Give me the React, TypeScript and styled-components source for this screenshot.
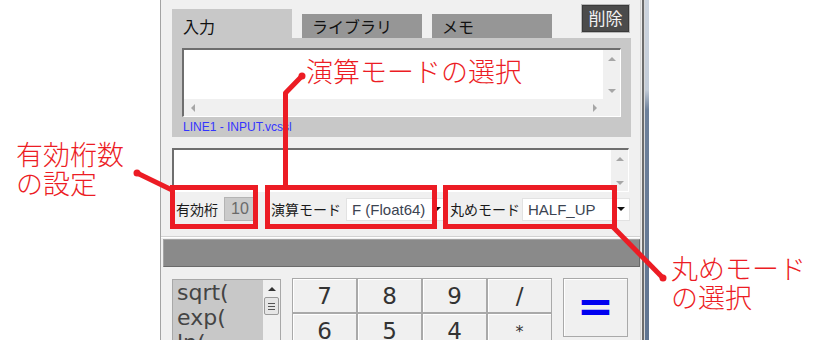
import React from "react"
import styled, { createGlobalStyle } from "styled-components"

const RED = "#ec1c24"

const GlobalStyle = createGlobalStyle`
	*, *::before, *::after { box-sizing: border-box; }
	html, body { margin: 0; padding: 0; background: #fff; }
	body { font-family: "Noto Sans CJK JP", "Noto Sans", sans-serif; }
`

type Dir = "up" | "down" | "left" | "right"

const Page = styled.div`
	position: relative;
	width: 822px;
	height: 340px;
	overflow: hidden;
	display: flex;
	background: #fff;
`

const Window = styled.div`
	flex-shrink: 0;
	width: 481px;
	height: 340px;
	margin-left: 160px;
	border-left: 1px solid #a3a3a3;
	border-right: 1px solid #d4d4d4;
	background: #f0f0f0;
`

const FrameEdge = styled.div`
	flex-shrink: 0;
	width: 8px;
	height: 340px;
	background: linear-gradient(to right, #ececec 0 1px, #6c6c6c 1px 3px, #d8d8d8 3px 4px, transparent 4px),
		linear-gradient(to bottom, #cdd5df 0, #c3ccd8 90px, #6e819b 110px, #5f7491 100%);
`

const TabBar = styled.div`
	display: flex;
	align-items: flex-end;
	height: 38px;
	padding: 4px 10px 0 11px;
`

const Tab = styled.div<{ $active?: boolean }>`
	width: 120px;
	height: ${({ $active }) => ($active ? "29px" : "24px")};
	padding: ${({ $active }) => ($active ? "5px 11px 0" : "0 10px")};
	background: ${({ $active }) => ($active ? "#c8c8c8" : "#969696")};
	font-size: 16px;
	line-height: 24px;
	color: #111;
	& + & {
		margin-left: 10px;
	}
`

const DeleteButton = styled.div`
	align-self: flex-start;
	margin-left: auto;
	width: 49px;
	height: 29px;
	border: 1px solid #b8b8b8;
	box-shadow: inset 0 0 0 1px #3a3a3a;
	background: #4b4b4b;
	color: #f2f2f2;
	font-size: 17px;
	line-height: 26px;
	text-align: center;
`

const Panel = styled.div`
	margin: 0 9px 0 11px;
	height: 99px;
	padding: 10px 10px 0;
	background: #c8c8c8;
`

const Editor = styled.div<{ $h: number; $hscroll?: boolean }>`
	height: ${({ $h }) => $h}px;
	border-top: 2px solid #6e6e6e;
	border-left: 2px solid #6e6e6e;
	border-right: 1px solid #fff;
	border-bottom: 1px solid #fff;
	display: grid;
	grid-template-columns: 1fr 17px;
	grid-template-rows: ${({ $hscroll }) => ($hscroll ? "1fr 17px" : "1fr")};
	background: #fff;
`

const EditArea = styled.div`
	background: #fff;
`

const VScroll = styled.div`
	display: flex;
	flex-direction: column;
	justify-content: space-between;
	background: #f0f0f0;
`

const HScroll = styled.div`
	display: flex;
	justify-content: space-between;
	background: #f0f0f0;
`

const ScrollCorner = styled.div`
	background: #f0f0f0;
`

const ScrollBtn = styled.div`
	width: 17px;
	height: 17px;
	display: flex;
	align-items: center;
	justify-content: center;
`

const Arrow = styled.span<{ $dir: Dir; $color?: string }>`
	width: 0;
	height: 0;
	border-style: solid;
	border-color: transparent;
	${({ $dir, $color = "#a6a6a6" }) => {
		if ($dir === "up") return `border-width: 0 4px 4px; border-bottom-color: ${$color};`
		if ($dir === "down") return `border-width: 4px 4px 0; border-top-color: ${$color};`
		if ($dir === "left") return `border-width: 4px 4px 4px 0; border-right-color: ${$color};`
		return `border-width: 4px 0 4px 4px; border-left-color: ${$color};`
	}}
`

const FileLabel = styled.div`
	height: 20px;
	padding-left: 1px;
	font-family: "Liberation Sans", Arial, sans-serif;
	font-size: 12px;
	line-height: 21px;
	color: #3434ff;
`

const LowerEditor = styled.div`
	margin: 11px 11px 0;
`

const OptionsRow = styled.div`
	display: flex;
	align-items: center;
	height: 34px;
	padding: 0 9px 0 15px;
`

const OptLabel = styled.span<{ $gapLeft?: number; $gapRight?: number }>`
	margin-left: ${({ $gapLeft = 0 }) => $gapLeft}px;
	margin-right: ${({ $gapRight = 0 }) => $gapRight}px;
	font-size: 14px;
	color: #1a1a1a;
	white-space: nowrap;
`

const DigitsInput = styled.div`
	width: 34px;
	height: 24px;
	padding-left: 6px;
	border: 1px solid #b4b4b4;
	background: #cbcbcb;
	font-family: "Liberation Sans", Arial, sans-serif;
	font-size: 16px;
	line-height: 22px;
	color: #6a6a6a;
`

const Select = styled.div<{ $w: number }>`
	width: ${({ $w }) => $w}px;
	height: 23px;
	display: flex;
	align-items: center;
	justify-content: space-between;
	padding: 0 4px 0 5px;
	border: 1px solid #e2e2e2;
	background: #fff;
	font-family: "Liberation Sans", Arial, sans-serif;
	font-size: 15px;
	color: #3c4452;
`

const Separator = styled.div`
	margin-top: 10px;
	height: 2px;
	border-top: 1px solid #d2d2d2;
	border-bottom: 1px solid #fff;
`

const StatusBar = styled.div`
	margin: 1px 0 0 2px;
	height: 28px;
	background: #8a8a8a;
	border-top: 1px solid #a4a4a4;
	border-left: 1px solid #a4a4a4;
	border-right: 1px solid #6a6a6a;
	border-bottom: 1px solid #6a6a6a;
`

const Keypad = styled.div`
	display: flex;
	align-items: flex-start;
	margin-top: 11px;
	padding-left: 11px;
`

const FuncList = styled.div`
	width: 109px;
	height: 80px;
	margin-top: 1px;
	border: 1px solid #a8a8a8;
	display: flex;
	background: #c8c8c8;
`

const FuncItems = styled.div`
	flex: 1;
	padding: 0 0 0 4px;
	font-family: "DejaVu Sans", Verdana, sans-serif;
	font-size: 22px;
	line-height: 25px;
	color: #444;
`

const ListScroll = styled.div`
	width: 17px;
	display: flex;
	flex-direction: column;
	align-items: center;
	background: #f0f0f0;
`

const Thumb = styled.div`
	width: 15px;
	height: 18px;
	border: 1px solid #9a9a9a;
	border-radius: 2px;
	background: #e6e6e6;
	display: flex;
	flex-direction: column;
	align-items: center;
	justify-content: center;
	gap: 2px;
`

const Grip = styled.span`
	width: 7px;
	height: 1px;
	background: #555;
`

const Keys = styled.div`
	display: grid;
	grid-template-columns: repeat(4, 65px);
	grid-auto-rows: 35px;
	margin-left: 11px;
`

const Key = styled.div<{ $small?: boolean }>`
	display: flex;
	align-items: ${({ $small }) => ($small ? "flex-start" : "center")};
	justify-content: center;
	padding-top: ${({ $small }) => ($small ? "8px" : "0")};
	border: 1px solid #a9a9a9;
	box-shadow: inset 1px 1px #fff;
	background: #f0f0f0;
	font-family: "DejaVu Sans", Verdana, sans-serif;
	font-size: ${({ $small }) => ($small ? "16px" : "23px")};
	color: #333;
`

const EqualsKey = styled(Key)`
	width: 65px;
	height: 59px;
	margin-left: 11px;
	padding-bottom: 4px;
	font-size: 44px;
	font-weight: bold;
	color: #0000f0;
`

const Overlay = styled.svg`
	position: absolute;
	left: 0;
	top: 0;
	pointer-events: none;
`

const Callout = styled.div<{ $left: number; $top: number }>`
	position: absolute;
	left: ${({ $left }) => $left}px;
	top: ${({ $top }) => $top}px;
	font-family: "Noto Sans CJK JP", "Noto Sans", sans-serif;
	font-size: 27px;
	font-weight: 300;
	line-height: 29px;
	color: ${RED};
	white-space: pre;
`

const Scrollbar = ({ h }: { h?: boolean }) =>
	h ? (
		<HScroll>
			<ScrollBtn>
				<Arrow $dir="left" />
			</ScrollBtn>
			<ScrollBtn>
				<Arrow $dir="right" />
			</ScrollBtn>
		</HScroll>
	) : (
		<VScroll>
			<ScrollBtn>
				<Arrow $dir="up" />
			</ScrollBtn>
			<ScrollBtn>
				<Arrow $dir="down" />
			</ScrollBtn>
		</VScroll>
	)

const keys = ["7", "8", "9", "/", "6", "5", "4", "*"]

const App = () => {
	return (
		<Page>
			<GlobalStyle />
			<Window>
				<TabBar>
					<Tab $active>入力</Tab>
					<Tab>ライブラリ</Tab>
					<Tab>メモ</Tab>
					<DeleteButton>削除</DeleteButton>
				</TabBar>
				<Panel>
					<Editor $h={69} $hscroll>
						<EditArea />
						<Scrollbar />
						<Scrollbar h />
						<ScrollCorner />
					</Editor>
					<FileLabel>LINE1 - INPUT.vcssl</FileLabel>
				</Panel>
				<LowerEditor>
					<Editor $h={44}>
						<EditArea />
						<Scrollbar />
					</Editor>
				</LowerEditor>
				<OptionsRow>
					<OptLabel $gapRight={6}>有効桁</OptLabel>
					<DigitsInput>10</DigitsInput>
					<OptLabel $gapLeft={13} $gapRight={5}>
						演算モード
					</OptLabel>
					<Select $w={100}>
						<span>F (Float64)</span>
						<Arrow $dir="down" $color="#111" />
					</Select>
					<OptLabel $gapLeft={4} $gapRight={2}>
						丸めモード
					</OptLabel>
					<Select $w={108}>
						<span>HALF_UP</span>
						<Arrow $dir="down" $color="#111" />
					</Select>
				</OptionsRow>
				<Separator />
				<StatusBar />
				<Keypad>
					<FuncList>
						<FuncItems>
							<div>sqrt(</div>
							<div>exp(</div>
							<div>ln(</div>
						</FuncItems>
						<ListScroll>
							<ScrollBtn>
								<Arrow $dir="up" $color="#333" />
							</ScrollBtn>
							<Thumb>
								<Grip />
								<Grip />
								<Grip />
							</Thumb>
						</ListScroll>
					</FuncList>
					<Keys>
						{keys.map((k) => (
							<Key key={k} $small={k === "*"}>
								{k}
							</Key>
						))}
					</Keys>
					<EqualsKey>=</EqualsKey>
				</Keypad>
			</Window>
			<FrameEdge />

			{/* annotations drawn over the screenshot */}
			<Overlay width="822" height="340" viewBox="0 0 822 340">
				<g fill="none" stroke={RED} strokeWidth="5">
					<rect x="172.5" y="187.5" width="83" height="39" />
					<rect x="267.5" y="187.5" width="167" height="39" />
					<rect x="445.5" y="187.5" width="169" height="39" />
					<polyline points="285.5,187 285.5,93 302,76" strokeLinejoin="round" />
					<line x1="172" y1="190" x2="137" y2="173" />
					<line x1="613" y1="227" x2="663" y2="278" />
				</g>
				<g fill={RED}>
					<circle cx="302" cy="76" r="3.5" />
					<circle cx="137" cy="173" r="3.5" />
					<circle cx="663" cy="278" r="3.5" />
				</g>
			</Overlay>
			<Callout $left={306} $top={56}>演算モードの選択</Callout>
			<Callout $left={16} $top={139}>{"有効桁数\nの設定"}</Callout>
			<Callout $left={671} $top={253}>{"丸めモード\nの選択"}</Callout>
		</Page>
	)
}

export default App
